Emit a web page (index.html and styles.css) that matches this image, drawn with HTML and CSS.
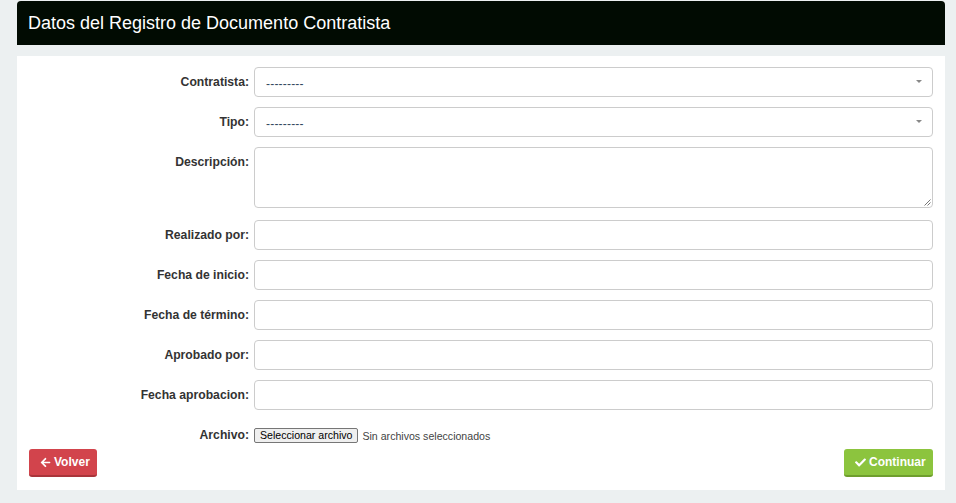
FILE: index.html
```html
<!DOCTYPE html>
<html lang="es">
<head>
<meta charset="utf-8">
<title>Datos del Registro de Documento Contratista</title>
<link rel="stylesheet" href="styles.css">
</head>
<body>
<div class="page">
  <div class="header">
    <h1 class="title">Datos del Registro de Documento Contratista</h1>
  </div>
  <div class="panel">
    <form class="form">
      <div class="row">
        <label class="label">Contratista:</label>
        <div class="select"><span class="select-text">---------</span><span class="caret"></span></div>
      </div>
      <div class="row">
        <label class="label">Tipo:</label>
        <div class="select"><span class="select-text">---------</span><span class="caret"></span></div>
      </div>
      <div class="row row-area">
        <label class="label">Descripción:</label>
        <div class="textarea">
          <svg class="grip" width="8" height="8" viewBox="0 0 8 8"><path d="M7.5 1.5 L1.5 7.5 M7.5 4.5 L4.5 7.5" stroke="#777" stroke-width="1" fill="none"/></svg>
        </div>
      </div>
      <div class="row">
        <label class="label">Realizado por:</label>
        <div class="input"></div>
      </div>
      <div class="row">
        <label class="label">Fecha de inicio:</label>
        <div class="input"></div>
      </div>
      <div class="row">
        <label class="label">Fecha de término:</label>
        <div class="input"></div>
      </div>
      <div class="row">
        <label class="label">Aprobado por:</label>
        <div class="input"></div>
      </div>
      <div class="row">
        <label class="label">Fecha aprobacion:</label>
        <div class="input"></div>
      </div>
      <div class="row row-file">
        <label class="label label-file">Archivo:</label>
        <div class="file">
          <span class="file-btn">Seleccionar archivo</span>
          <span class="file-text">Sin archivos seleccionados</span>
        </div>
      </div>
    </form>
    <div class="actions">
      <button class="btn btn-red" type="button">
        <svg class="ico" viewBox="0 0 448 512"><path fill="#fff" d="M257.5 445.1l-22.2 22.2c-9.4 9.4-24.6 9.4-33.9 0L7 273c-9.4-9.4-9.4-24.6 0-33.9L201.4 44.7c9.4-9.4 24.6-9.4 33.9 0l22.2 22.2c9.5 9.5 9.3 25-.4 34.3L136.6 216H424c13.3 0 24 10.7 24 24v32c0 13.3-10.7 24-24 24H136.6l120.5 114.8c9.8 9.300 10 24.8.4 34.3z"/></svg>
        <span>Volver</span>
      </button>
      <button class="btn btn-green" type="button">
        <svg class="ico" viewBox="0 0 512 512"><path fill="#fff" d="M173.9 439.4l-166.4-166.4c-10-10-10-26.2 0-36.2l36.2-36.2c10-10 26.2-10 36.2 0L192 312.7 432.1 72.6c10-10 26.2-10 36.2 0l36.2 36.2c10 10 10 26.2 0 36.2L210.1 439.4c-10 10-26.2 10-36.2 0z"/></svg>
        <span>Continuar</span>
      </button>
    </div>
  </div>
</div>
</body>
</html>
```

FILE: styles.css
```css
html, body {
  margin: 0;
  padding: 0;
}
body {
  background: #ecf0f1;
  font-family: "Liberation Sans", Arial, Helvetica, sans-serif;
  color: #333;
}
.page {
  margin: 1px 11px 0 17px;
}
.header {
  background: #010b02;
  height: 44px;
  border-radius: 4px 4px 0 0;
  display: flex;
  align-items: center;
  padding-left: 11px;
}
.title {
  margin: 0;
  font-size: 18px;
  font-weight: normal;
  color: #fff;
  line-height: 20px;
}
.panel {
  margin-top: 11px;
  background: #fff;
  padding: 11px 12px 13px 12px;
}
.form {
  display: flex;
  flex-direction: column;
  gap: 10px;
}
.row {
  display: grid;
  grid-template-columns: 225px 1fr;
}
.label {
  font-size: 12.2px;
  font-weight: bold;
  text-align: right;
  padding-right: 5px;
  padding-top: 8px;
  line-height: 15px;
  color: #333;
}
.select, .input, .textarea {
  box-sizing: border-box;
  height: 30px;
  border: 1px solid #ccc;
  border-radius: 4px;
  background: #fff;
  position: relative;
}
.select {
  display: flex;
  align-items: center;
  padding-left: 11px;
  padding-top: 3px;
}
.select-text {
  font-size: 12px;
  color: #34495e;
  letter-spacing: 0.2px;
}
.caret {
  position: absolute;
  right: 10px;
  top: 12px;
  width: 0;
  height: 0;
  border-left: 3px solid transparent;
  border-right: 3px solid transparent;
  border-top: 3px solid #888;
}
.row-area {
  margin-bottom: 2px;
}
.textarea {
  height: 61px;
}
.grip {
  position: absolute;
  right: 1px;
  bottom: 1px;
}
.row-file {
  margin-top: 8px;
}
.label-file {
  padding-top: 0;
}
.file {
  display: flex;
  align-items: center;
  gap: 4px;
  font-size: 10.6px;
  height: 15px;
}
.file-btn {
  box-sizing: border-box;
  height: 15px;
  line-height: 13px;
  padding: 0 5px;
  border: 1px solid #767676;
  border-radius: 2px;
  background: #efefef;
  color: #000;
  font-size: 10.6px;
}
.file-text {
  color: #444;
}
.actions {
  display: flex;
  justify-content: space-between;
  margin-top: 6px;
}
.btn {
  box-sizing: border-box;
  height: 28px;
  border: none;
  border-radius: 3px;
  font-family: "Liberation Sans", Arial, Helvetica, sans-serif;
  font-size: 12px;
  font-weight: bold;
  color: #fff;
  display: flex;
  align-items: center;
  gap: 3px;
  padding: 0 0 0 11px;
  cursor: pointer;
}
.btn-red {
  width: 68px;
  background: #d2444c;
  border-bottom: 2px solid #a9343a;
}
.btn-green {
  width: 89px;
  background: #8cc43e;
  border-bottom: 2px solid #6e9e2d;
}
.ico {
  display: block;
  width: 11px;
  height: 11px;
  flex-shrink: 0;
}
```
